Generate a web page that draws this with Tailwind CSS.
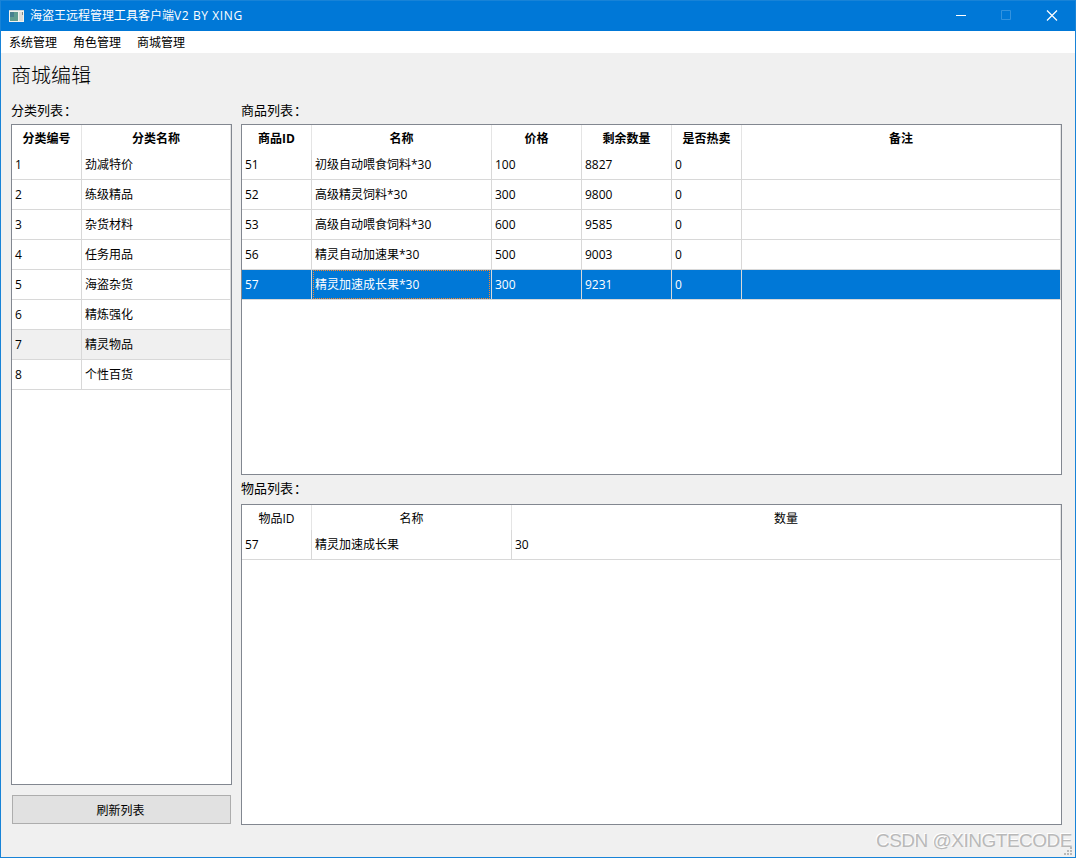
<!DOCTYPE html>
<html lang="zh-CN">
<head>
    <meta charset="UTF-8">
    <meta name="viewport" content="width=device-width, initial-scale=1.0">
    <title>海盗王远程管理工具客户端V2 BY XING</title>
    <script src="https://cdn.jsdelivr.net/npm/@tailwindcss/browser@4"></script>
    <style>
        /* dotted focus rectangle, one pixel on and one off */
        .focus-cell {
            background:
                repeating-linear-gradient(90deg, #ff8728 0 1px, transparent 1px 2px) top / 100% 1px no-repeat,
                repeating-linear-gradient(90deg, #ff8728 0 1px, transparent 1px 2px) bottom / 100% 1px no-repeat,
                repeating-linear-gradient(#ff8728 0 1px, transparent 1px 2px) left / 1px 100% no-repeat,
                repeating-linear-gradient(#ff8728 0 1px, transparent 1px 2px) right / 1px 100% no-repeat;
        }
    </style>
</head>
<body class="h-screen overflow-hidden bg-[#f0f0f0] font-['Open_Sans','Noto_Sans_CJK_SC',sans-serif] text-xs text-black">
<div class="relative flex h-full flex-col border-x border-b border-[#1883d7]">

    <!-- title bar -->
    <header class="flex h-[31px] shrink-0 items-center border-t border-[#1883d7] bg-[#0078d7] pl-2 text-white">
        <svg class="mr-1.5 mb-px h-3 w-[15px]" viewBox="0 0 15 12" shape-rendering="crispEdges">
            <rect width="15" height="12" fill="#f2f2ee"/>
            <rect width="15" height="1" fill="#c9d3d8"/>
            <rect x="1" y="2" width="8" height="9" fill="#5f9c90"/>
            <rect x="1" y="2" width="4" height="5" fill="#47808f"/>
            <rect x="10" y="2" width="4" height="9" fill="#dcdcd8"/>
            <rect x="13" y="2" width="1" height="3" fill="#7f8c8c"/>
        </svg>
        <span>海盗王远程管理工具客户端<span class="tracking-[0.6px]">V2 BY XING</span></span>
        <div class="ml-auto flex h-full items-center pb-0.5">
            <svg class="h-[11px] w-[45px]" viewBox="0 0 45 11" fill="none" stroke="#fff"><path d="M18 5.5h10"/></svg>
            <svg class="h-[11px] w-[46px]" viewBox="0 0 46 11" fill="none" stroke="#3393df"><path d="M18.5.5h9v9h-9z"/></svg>
            <svg class="h-[11px] w-[46px]" viewBox="0 0 46 11" fill="none" stroke="#fff" stroke-width="1.2"><path d="M18 .5l10 10M28 .5l-10 10"/></svg>
        </div>
    </header>

    <nav class="flex h-[22px] shrink-0 items-center gap-4 bg-white pt-0.5 pl-2">
        <span>系统管理</span>
        <span>角色管理</span>
        <span>商城管理</span>
    </nav>

    <main class="flex min-h-0 flex-1 flex-col pl-2.5 pr-[13px] pb-8">
        <h1 class="h-[46px] shrink-0 pt-2 text-[20px] leading-[30px] font-light">商城编辑</h1>

        <div class="flex min-h-0 flex-1 gap-[9px]">
            <!-- categories -->
            <aside class="flex w-[221px] shrink-0 flex-col">
                <p class="h-[25px] text-[13px] leading-[23px]">分类列表<span class="ml-px">：</span></p>
                <div class="h-[661px] border border-[#828790] bg-white">
                    <table class="w-full table-fixed border-separate border-spacing-0 [&_td]:h-[30px] [&_td]:border-r [&_td]:border-b [&_td]:border-[#d8d8d8] [&_td]:pl-[3px] [&_th]:h-[25px] [&_th]:border-r [&_th]:border-[#e5e5e5] [&_th]:pt-0.5">
                        <colgroup><col class="w-[70px]"><col></colgroup>
                        <tr><th>分类编号</th><th>分类名称</th></tr>
                        <tr><td>1</td><td>劲减特价</td></tr>
                        <tr><td>2</td><td>练级精品</td></tr>
                        <tr><td>3</td><td>杂货材料</td></tr>
                        <tr><td>4</td><td>任务用品</td></tr>
                        <tr><td>5</td><td>海盗杂货</td></tr>
                        <tr><td>6</td><td>精炼强化</td></tr>
                        <tr class="bg-[#f0f0f0]"><td>7</td><td>精灵物品</td></tr>
                        <tr><td>8</td><td>个性百货</td></tr>
                    </table>
                </div>
                <button class="mx-px mt-2.5 h-[29px] border border-[#adadad] bg-[#e1e1e1] pt-0.5 pr-0.5">刷新列表</button>
            </aside>

            <section class="flex min-w-0 flex-1 flex-col">
                <!-- goods -->
                <p class="h-[25px] text-[13px] leading-[23px]">商品列表<span class="ml-px">：</span></p>
                <div class="h-[351px] border border-[#828790] bg-white">
                    <table class="w-full table-fixed border-separate border-spacing-0 [&_td]:h-[30px] [&_td]:border-r [&_td]:border-b [&_td]:border-[#d8d8d8] [&_td]:pl-[3px] [&_th]:h-[25px] [&_th]:border-r [&_th]:border-[#e5e5e5] [&_th]:pt-0.5">
                        <colgroup><col class="w-[70px]"><col class="w-[180px]"><col class="w-[90px]"><col class="w-[90px]"><col class="w-[70px]"><col></colgroup>
                        <tr><th>商品ID</th><th>名称</th><th>价格</th><th>剩余数量</th><th>是否热卖</th><th>备注</th></tr>
                        <tr><td>51</td><td>初级自动喂食饲料*30</td><td>100</td><td>8827</td><td>0</td><td></td></tr>
                        <tr><td>52</td><td>高级精灵饲料*30</td><td>300</td><td>9800</td><td>0</td><td></td></tr>
                        <tr><td>53</td><td>高级自动喂食饲料*30</td><td>600</td><td>9585</td><td>0</td><td></td></tr>
                        <tr><td>56</td><td>精灵自动加速果*30</td><td>500</td><td>9003</td><td>0</td><td></td></tr>
                        <tr class="text-white [&>td]:bg-[#0078d7] [&>td]:bg-clip-padding"><td>57</td><td><div class="focus-cell -ml-0.5 mr-px h-[29px] pl-0.5 leading-[29px]">精灵加速成长果*30</div></td><td>300</td><td>9231</td><td>0</td><td></td></tr>
                    </table>
                </div>

                <!-- items contained in the selected goods -->
                <p class="h-[29px] text-[13px] leading-[27px]">物品列表<span class="ml-px">：</span></p>
                <div class="h-[321px] border border-[#828790] bg-white">
                    <table class="w-full table-fixed border-separate border-spacing-0 [&_td]:h-[30px] [&_td]:border-r [&_td]:border-b [&_td]:border-[#d8d8d8] [&_td]:pl-[3px] [&_th]:h-[25px] [&_th]:border-r [&_th]:border-[#e5e5e5] [&_th]:pt-0.5 [&_th]:font-normal">
                        <colgroup><col class="w-[70px]"><col class="w-[200px]"><col></colgroup>
                        <tr><th>物品ID</th><th>名称</th><th>数量</th></tr>
                        <tr><td>57</td><td>精灵加速成长果</td><td>30</td></tr>
                    </table>
                </div>
            </section>
        </div>
    </main>

    <!-- resize grip -->
    <svg class="absolute right-[3px] bottom-0.5 h-2 w-2" viewBox="0 0 8 8" fill="#b8b8b8" shape-rendering="crispEdges">
        <path d="M6 0h2v2h-2zM3 3h2v2h-2zM6 3h2v2h-2zM0 6h2v2h-2zM3 6h2v2h-2zM6 6h2v2h-2z"/>
    </svg>
    <span class="absolute right-[3px] bottom-1 font-['Liberation_Sans',sans-serif] text-[19px] leading-[24px] tracking-[-0.5px] whitespace-nowrap text-[#b9b9b9] [text-shadow:-1px_-1px_0_#fff]">CSDN @XINGTECODE</span>
</div>
</body>
</html>
